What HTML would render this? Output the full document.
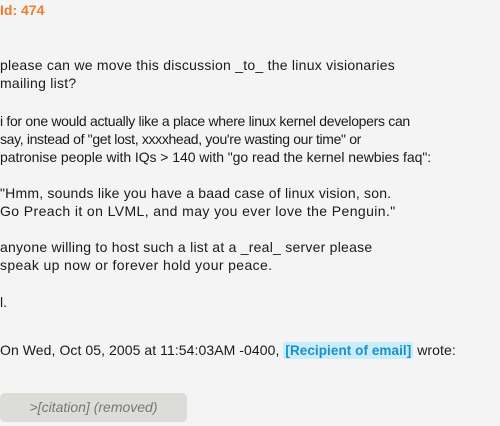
<!DOCTYPE html>
<html><head><style>
body{margin:0;background:#f4f4f4;width:500px;height:426px;overflow:hidden;font-family:"Liberation Sans",sans-serif;font-size:14px;color:#1a1a1a;}
.id{position:absolute;left:0;top:2px;color:#f07c33;font-weight:bold;font-size:14px;}
p{position:absolute;left:0;margin:0;line-height:18px;white-space:nowrap;}
p span{display:block}
.r{background:#c9eefa;color:#1a8fc6;font-weight:bold;padding:1px 2px;border-radius:2px;font-size:13.5px;}
.c{position:absolute;left:0;top:393px;width:187px;height:29px;background:#dcdcd8;border-radius:5px;color:#777;font-style:italic;text-align:center;line-height:29px;font-size:14px;}
</style></head><body>
<div class="id">Id: 474</div>
<p style="top:56px;letter-spacing:0.25px">please can we move this discussion _to_ the linux visionaries<br>mailing list?</p>
<p style="top:112px"><span style="letter-spacing:-0.31px">i for one would actually like a place where linux kernel developers can</span><span style="letter-spacing:-0.34px">say, instead of "get lost, xxxxhead, you're wasting our time" or</span><span style="letter-spacing:-0.06px">patronise people with IQs &gt; 140 with "go read the kernel newbies faq":</span></p>
<p style="top:184px"><span style="letter-spacing:0.2px">"Hmm, sounds like you have a baad case of linux vision, son.</span><span style="letter-spacing:0.4px">Go Preach it on LVML, and may you ever love the Penguin."</span></p>
<p style="top:238px"><span style="letter-spacing:0.24px">anyone willing to host such a list at a _real_ server please</span><span style="letter-spacing:0.37px">speak up now or forever hold your peace.</span></p>
<p style="top:293px">l.</p>
<p style="top:341px;letter-spacing:0.07px">On Wed, Oct 05, 2005 at 11:54:03AM -0400, <span class="r" style="display:inline">[Recipient of email]</span> wrote:</p>
<div class="c">&gt;[citation] (removed)</div>
</body></html>
